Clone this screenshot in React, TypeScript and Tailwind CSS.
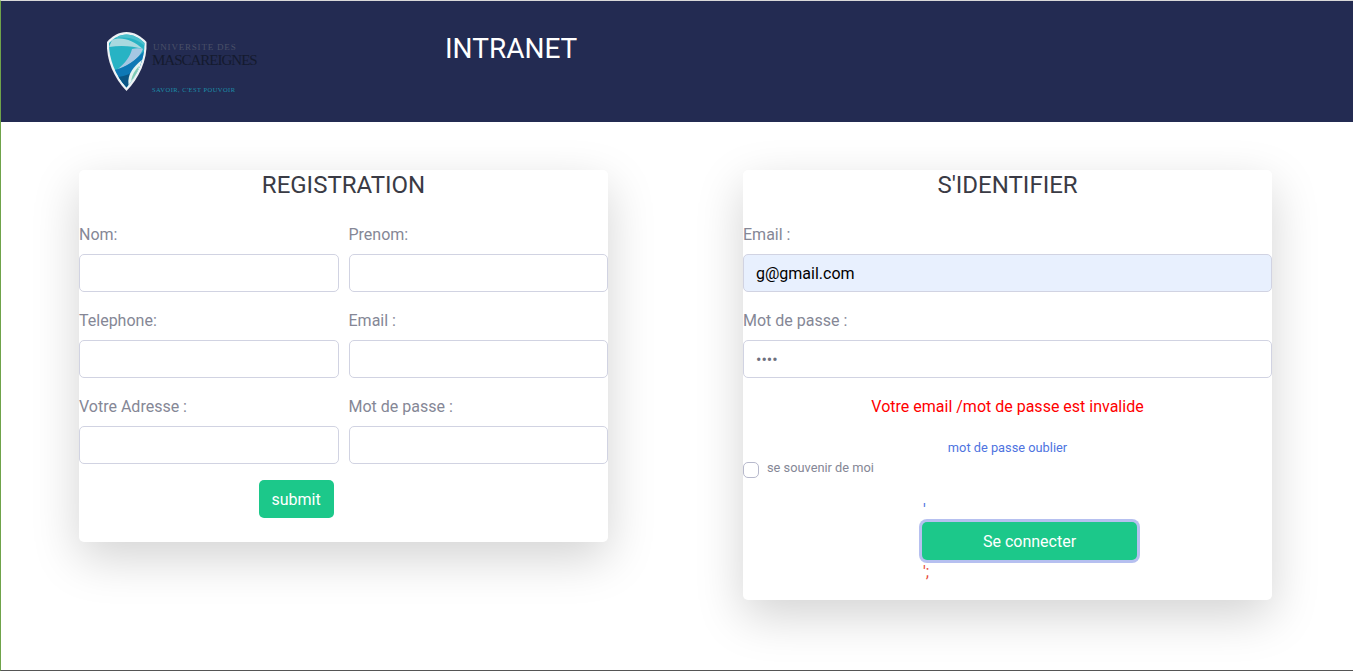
function Field({ label, value, type = "text", filled }: { label: string; value?: string; type?: string; filled?: boolean }) {
  return (
    <div className="flex flex-col">
      <label className="mb-2 h-6 text-base leading-[26px] text-[#858796]">{label}</label>
      <input
        type={type}
        readOnly
        value={value ?? ""}
        className={
          "h-[38px] w-full rounded-[5px] border border-[#d1d3e2] px-3 text-base outline-none " +
          (filled ? "bg-[#e8f0fe] text-black" : "bg-white text-[#6e707e]")
        }
      />
    </div>
  );
}

function Logo() {
  return (
    <div className="flex items-start">
      <svg width="42" height="60" viewBox="0 0 42 60" className="shrink-0">
        <path d="M20.500 0 C28 0 35 4 40.500 10 C41.500 28 33 46 20.500 59 C8 46 0 28 1 10 C6 4 13 0 20.500 0Z" fill="#eef2f5" />
        <clipPath id="shield">
          <path d="M20.500 2.500 C27 2.500 33.500 6 38.500 11 C39 27 31 44 20.500 55.500 C10 44 2.500 27 3 11 C8 6 14 2.500 20.500 2.500Z" />
        </clipPath>
        <g clipPath="url(#shield)">
          <rect width="42" height="60" fill="#27b3c4" />
          <path d="M3 2 H40 V15 C32 7 20 3 6 7Z" fill="#4cc0cd" />
          <path d="M6 8 C15 4 27 8 37 17 C27 14 15 13 3 15Z" fill="#a9d9df" />
          <path d="M37 17 C33 27 24 33 12 37 C19 31 24 25 26 17 C30 16 34 16 37 17Z" fill="#a5c7e3" />
          <path d="M8 38 C20 36 31 27 38 19 C38 30 32 40 27 46 L20.500 56 L10 44Z" fill="#0e78b5" />
          <path d="M12 45 C20 44 25 42 29 37 C28 44 24 50 20.500 56Z" fill="#0a5584" />
          <path d="M22.500 53 C21 42 28 34 36 28 C35 38 30 48 22.500 53Z" fill="#e4f3f1" />
          <path d="M25 49 C26 43 29 38 33 34 C32 40 29 45 25 49Z" fill="#7fcbb5" />
        </g>
      </svg>
      <div className="mt-[11px] ml-[4px] flex flex-col font-['Liberation_Serif',serif]">
        <span className="h-[8px] pl-[1px] text-[9px] leading-[8px] tracking-[0.8px] text-[#4a5068]">UNIVERSITE DES</span>
        <span className="h-[18px] text-[15px] leading-[18px] tracking-[-1px] text-[#141a2e]">MASCAREIGNES</span>
        <span className="mt-[17px] h-[8px] text-[6.500px] leading-[8px] tracking-[0.45px] text-[#1b8ea8]">SAVOIR, C'EST POUVOIR</span>
      </div>
    </div>
  );
}

function Card({ title, children }: { title: string; children: React.ReactNode }) {
  return (
    <section className="w-[529px] shrink-0 rounded-[5px] bg-white shadow-[0_16px_48px_rgba(0,0,0,0.175)]">
      <h2 className="mb-[22px] h-[30px] text-center text-2xl leading-[30px] text-[#3a3b45]">{title}</h2>
      {children}
    </section>
  );
}

export default function App() {
  return (
    <div className="flex h-[671px] flex-col overflow-hidden border-t border-b border-l border-t-[#d9d9d9] border-b-[#555] border-l-[#6fa34a] bg-white font-['Roboto',sans-serif]">
      <header className="flex h-[121px] shrink-0 bg-[#232b52]">
        <div className="mt-[31px] ml-[105px] w-[339px]">
          <Logo />
        </div>
        <h1 className="mt-[30px] h-9 text-[28px] leading-9 text-white">INTRANET</h1>
      </header>

      <main className="flex items-start gap-[135px] pt-[48px] pl-[78px]">
        <Card title="REGISTRATION">
          <div className="grid grid-cols-2 gap-x-[10px] gap-y-4">
            <Field label="Nom:" />
            <Field label="Prenom:" />
            <Field label="Telephone:" />
            <Field label="Email :" />
            <Field label="Votre Adresse :" />
            <Field label="Mot de passe :" type="password" />
          </div>
          <div className="flex justify-center pt-4 pr-[95px] pb-6">
            <button className="h-[38px] w-[75px] rounded-[5px] bg-[#1cc88a] pt-[1px] text-base text-white">submit</button>
          </div>
        </Card>

        <Card title="S'IDENTIFIER">
          <div className="flex flex-col gap-4">
            <Field label="Email :" value="g@gmail.com" filled />
            <Field label="Mot de passe :" value="abcd" type="password" />
          </div>
          <p className="mt-4 h-6 text-center text-base leading-[26px] text-[#ff0000]">Votre email /mot de passe est invalide</p>
          <p className="mt-[22px] h-[15px] text-center text-[12.800px] leading-[15px] text-[#4e73df]">mot de passe oublier</p>
          <div className="mt-[2px] flex items-start">
            <span className="mt-[5px] h-4 w-4 rounded-[5px] border border-[#b7b9cc] bg-white" />
            <span className="mt-[3px] ml-2 h-[15px] text-[12.800px] leading-[15px] text-[#858796]">se souvenir de moi</span>
          </div>
          <div className="mt-[20px] ml-[179px] w-[215px] pb-4">
            <p className="h-6 pl-[1px] text-base leading-6 text-[#4e73df]">'</p>
            <button className="h-[38px] w-full rounded-[5px] bg-[#1cc88a] pt-[1px] text-base text-white shadow-[0_0_0_3px_#b6c0f0]">Se connecter</button>
            <p className="h-6 pl-[1px] text-base leading-6 text-[#e74a3b]">';</p>
          </div>
        </Card>
      </main>
    </div>
  );
}
